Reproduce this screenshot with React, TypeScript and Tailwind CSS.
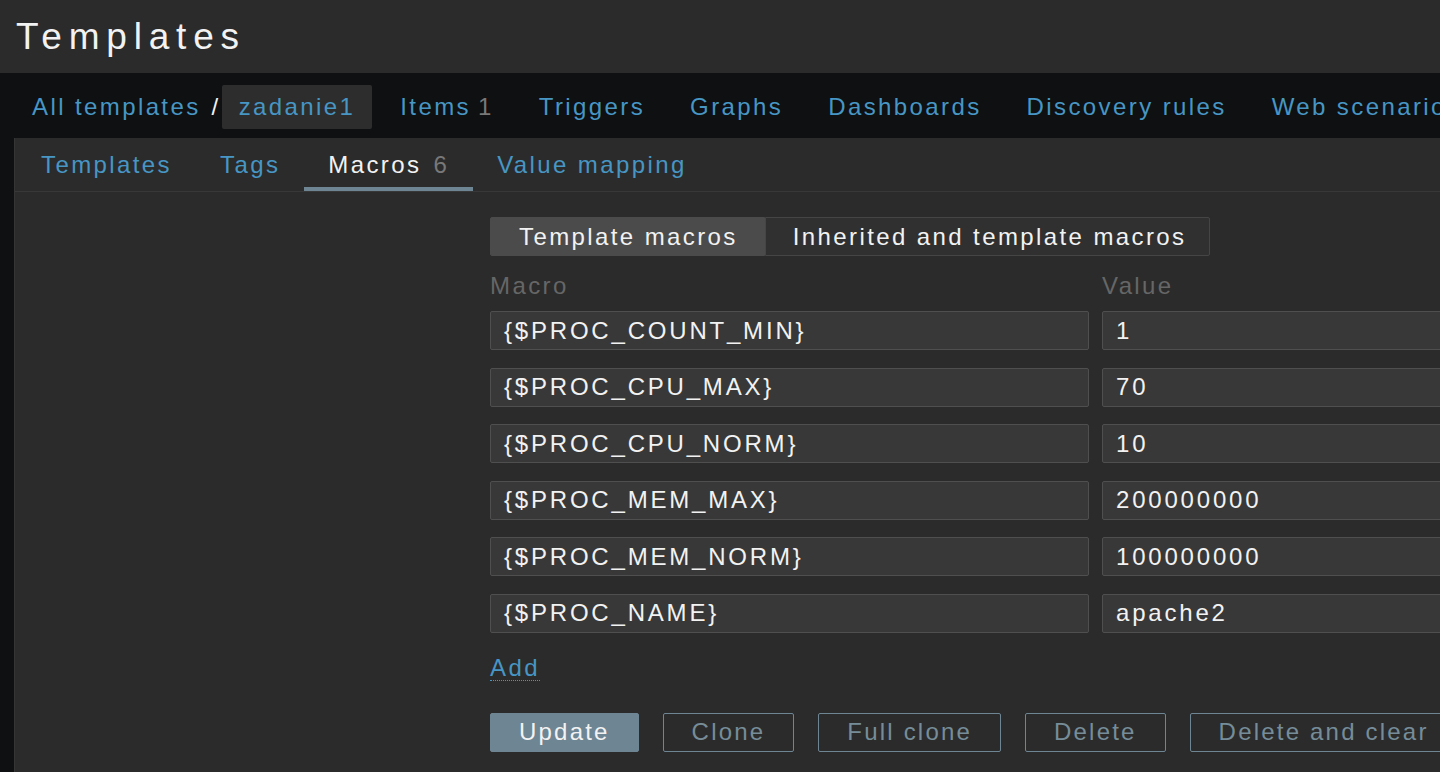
const font = { fontFamily: '"Liberation Sans", Arial, sans-serif' }

const macros = [
  { macro: '{$PROC_COUNT_MIN}', value: '1' },
  { macro: '{$PROC_CPU_MAX}', value: '70' },
  { macro: '{$PROC_CPU_NORM}', value: '10' },
  { macro: '{$PROC_MEM_MAX}', value: '200000000' },
  { macro: '{$PROC_MEM_NORM}', value: '100000000' },
  { macro: '{$PROC_NAME}', value: 'apache2' },
]

function NavLink({ label, count }: { label: string; count?: string }) {
  return (
    <a href="#" className="flex items-center text-[#4796c4]">
      {label}
      {count && <span className="ml-[7px] text-[#787878]">{count}</span>}
    </a>
  )
}

function Tab({ label, count, active }: { label: string; count?: string; active?: boolean }) {
  return (
    <div
      className={
        'flex h-full items-center border-b-4 px-[24px] pt-[4px] ' +
        (active ? 'border-[#6e8594] text-[#f2f2f2]' : 'border-transparent text-[#4796c4]')
      }
    >
      {label}
      {count && <span className="ml-[12px] text-[#787878]">{count}</span>}
    </div>
  )
}

export default function App() {
  return (
    <div
      className="flex h-screen w-full flex-col overflow-hidden bg-[#0e1012] text-[24px] tracking-[2.4px] text-[#f2f2f2] whitespace-nowrap"
      style={font}
    >
      <header className="flex h-[73px] shrink-0 items-center bg-[#2b2b2b] pl-[16px]">
        <h1 className="text-[37px] tracking-[6.8px]">Templates</h1>
      </header>

      <nav className="flex h-[65px] shrink-0 items-center gap-[45px] overflow-hidden pl-[32px] pt-[3px]">
        <div className="flex shrink-0 items-center">
          <a href="#" className="text-[#4796c4]">All templates</a>
          <span className="ml-[11px] text-[#f2f2f2]">/</span>
          <span className="ml-[1px] rounded-[2px] bg-[#2d2d2d] px-[17px] py-[4px] text-[#4796c4]">zadanie1</span>
        </div>
        <div className="-ml-[17px] flex shrink-0 gap-[45px]">
          <NavLink label="Items" count="1" />
          <NavLink label="Triggers" />
          <NavLink label="Graphs" />
          <NavLink label="Dashboards" />
          <NavLink label="Discovery rules" />
          <NavLink label="Web scenarios" />
        </div>
      </nav>

      <div className="ml-[14px] flex flex-1 flex-col overflow-hidden border-l border-[#353535] bg-[#2b2b2b]">
        <div className="flex h-[54px] shrink-0 items-stretch border-b border-[#383838] pl-[2px]">
          <Tab label="Templates" />
          <Tab label="Tags" />
          <Tab label="Macros" count="6" active />
          <Tab label="Value mapping" />
        </div>

        <div className="flex flex-col pl-[475px] pt-[25px]">
          <div className="flex">
            <div className="flex h-[39px] items-center rounded-l-[2px] border border-[#4b4b4b] bg-[#4b4b4b] pl-[28px] pr-[26px]">
              Template macros
            </div>
            <div className="flex h-[39px] items-center rounded-r-[2px] border border-[#454545] bg-[#303030] pl-[27px] pr-[22px]">
              Inherited and template macros
            </div>
          </div>

          <div className="mt-[18px] flex leading-[24px] text-[#666666]">
            <div className="w-[612px] shrink-0">Macro</div>
            <div>Value</div>
          </div>

          <div className="mt-[13px] flex flex-col gap-[17.6px] tracking-[2.8px]">
            {macros.map((m) => (
              <div key={m.macro} className="flex gap-[13px]">
                <div className="flex h-[39px] w-[599px] shrink-0 items-center rounded-[2px] border border-[#4f4f4f] bg-[#383838] px-[13px]">
                  {m.macro}
                </div>
                <div className="flex h-[39px] w-[420px] shrink-0 items-center rounded-[2px] border border-[#4f4f4f] bg-[#383838] px-[13px]">
                  {m.value}
                </div>
              </div>
            ))}
          </div>

          <div className="mt-[23px] flex">
            <a href="#" className="border-b border-dotted border-[#4796c4] leading-[24px] text-[#4796c4]">
              Add
            </a>
          </div>

          <div className="mt-[32px] flex gap-[24px] tracking-[2.2px]">
            <button className="h-[39px] shrink-0 rounded-[2px] border border-[#6e8594] bg-[#6e8594] px-[28px] text-[#f2f2f2]">
              Update
            </button>
            {['Clone', 'Full clone', 'Delete', 'Delete and clear'].map((b) => (
              <button
                key={b}
                className="h-[39px] shrink-0 rounded-[2px] border border-[#6e8594] px-[28px] text-[#768d99]"
              >
                {b}
              </button>
            ))}
          </div>
        </div>
      </div>
    </div>
  )
}
